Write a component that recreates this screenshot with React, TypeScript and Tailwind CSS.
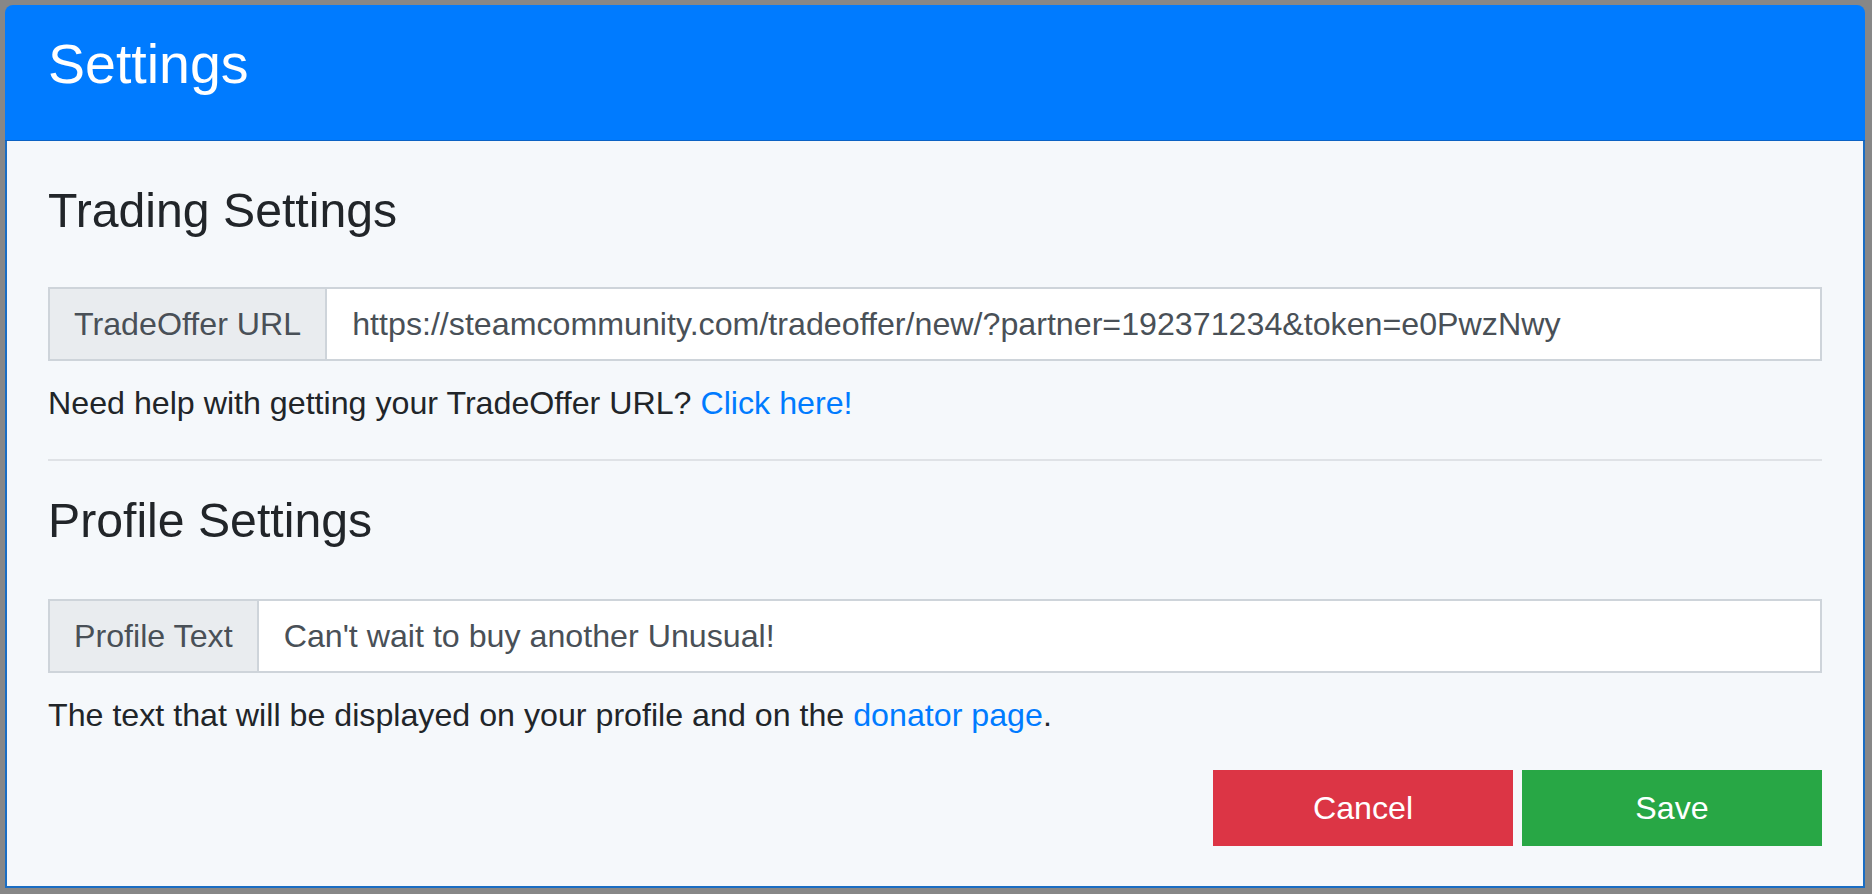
import React from "react";

export default function App() {
  const font = { fontFamily: '"Liberation Sans", Arial, sans-serif' };
  return (
    <div
      className="w-[1872px] h-[894px] bg-[#878787] pt-[5px] pl-[5px] pr-[7px] pb-[6px]"
      style={font}
    >
      <div className="w-[1860px] h-[883px] flex flex-col">
        <div className="h-[136px] shrink-0 bg-[#007bff] rounded-t-[8px] border-b border-[#0b62c4] pl-[43px] pt-[26px]">
          <h2 className="text-[55.5px] leading-[66px] text-white">Settings</h2>
        </div>
        <div className="flex-1 bg-[#f5f8fb] border-x-2 border-b-2 border-[#1a6dc3] px-[41px] pt-[41px] text-[#212529]">
          <h3 className="text-[48.2px] leading-[57px]">Trading Settings</h3>
          <div className="mt-[48px] h-[74px] flex border-2 border-[#ced4da] text-[32.2px] text-[#495057]">
            <div className="bg-[#e9ecef] border-r-2 border-[#ced4da] px-[24px] flex items-center whitespace-nowrap">
              TradeOffer URL
            </div>
            <div className="flex-1 bg-white pl-[25px] flex items-center whitespace-nowrap overflow-hidden">
              https://steamcommunity.com/tradeoffer/new/?partner=192371234&amp;token=e0PwzNwy
            </div>
          </div>
          <p className="mt-[18px] text-[32.2px] leading-[48px]">
            Need help with getting your TradeOffer URL?{" "}
            <a className="text-[#007bff]">Click here!</a>
          </p>
          <div className="mt-[32px] h-[2px] bg-[#dfe2e6]" />
          <h3 className="mt-[31px] text-[48.2px] leading-[57px]">Profile Settings</h3>
          <div className="mt-[50px] h-[74px] flex border-2 border-[#ced4da] text-[32.2px] text-[#495057]">
            <div className="bg-[#e9ecef] border-r-2 border-[#ced4da] px-[24px] flex items-center whitespace-nowrap">
              Profile Text
            </div>
            <div className="flex-1 bg-white pl-[25px] flex items-center whitespace-nowrap overflow-hidden">
              Can't wait to buy another Unusual!
            </div>
          </div>
          <p className="mt-[18px] text-[32.2px] leading-[48px]">
            The text that will be displayed on your profile and on the{" "}
            <a className="text-[#007bff]">donator page</a>.
          </p>
          <div className="mt-[31px] flex justify-end gap-[9px]">
            <button className="w-[300px] h-[76px] bg-[#dc3545] text-white text-[32.2px]">
              Cancel
            </button>
            <button className="w-[300px] h-[76px] bg-[#28a745] text-white text-[32.2px]">
              Save
            </button>
          </div>
        </div>
      </div>
    </div>
  );
}
